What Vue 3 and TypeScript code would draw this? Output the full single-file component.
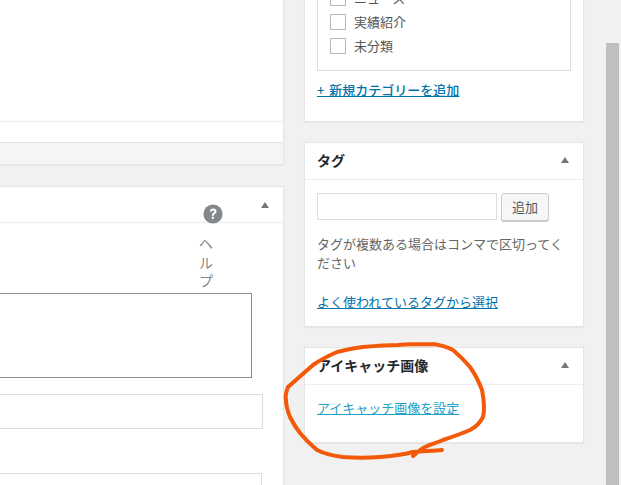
<script setup lang="ts">
const categories: string[] = ['ニュース', '実績紹介', '未分類']
</script>

<template>
  <div class="page">
    <main class="left">
      <section class="card top-card">
        <div class="top-body"></div>
        <div class="top-row"></div>
        <div class="top-foot"></div>
      </section>
      <section class="card editor-card">
        <header class="editor-head">
          <span class="caret"></span>
        </header>
        <div class="help">
          <svg class="help-icon" width="20" height="20" viewBox="0 0 20 20">
            <circle cx="10" cy="10" r="9.6" fill="#82878c" />
            <path d="M6.8 7.6c.1-2 1.500-3.100 3.400-3.100 2 0 3.300 1.100 3.300 2.800 0 1.300-.7 2-1.700 2.700-.8.500-1 .8-1 1.700H8.900c0-1.500.3-2.100 1.300-2.900.8-.6 1.200-.9 1.200-1.400 0-.6-.5-1-1.200-1-.8 0-1.300.4-1.400 1.200z" fill="#fff" />
            <rect x="8.800" y="12.700" width="2.100" height="2.200" fill="#fff" />
          </svg>
          <span class="help-text">ヘルプ</span>
        </div>
        <div class="editor-body">
          <div class="textarea"></div>
          <div class="field field-a"></div>
          <div class="field field-b"></div>
        </div>
      </section>
    </main>

    <aside class="right">
      <section class="card cat-card">
        <div class="cat-box">
          <label v-for="c in categories" :key="c" class="cat-row">
            <span class="check"></span>
            <span>{{ c }}</span>
          </label>
        </div>
        <a class="link add-link">+ 新規カテゴリーを追加</a>
      </section>

      <section class="card tag-card">
        <header class="side-head">
          <h2>タグ</h2>
          <span class="caret"></span>
        </header>
        <div class="tag-body">
          <div class="tag-input-row">
            <div class="tag-input"></div>
            <button class="tag-btn" type="button">追加</button>
          </div>
          <p class="tag-desc">タグが複数ある場合はコンマで区切ってください</p>
          <a class="link tag-link">よく使われているタグから選択</a>
        </div>
      </section>

      <section class="card thumb-card">
        <header class="side-head">
          <h2>アイキャッチ画像</h2>
          <span class="caret"></span>
        </header>
        <div class="thumb-body">
          <a class="thumb-link">アイキャッチ画像を設定</a>
        </div>
      </section>
    </aside>

    <div class="scrollbar"></div>

    <svg class="scribble" width="621" height="485" viewBox="0 0 621 485">
      <path
        d="M433 344C420 344 410 344 398 345C385 345 374 346 363 347C353 348 345 350 337 352C328 356 320 360 313 365C305 372 296 380 288 387C286 392 285 396 286 400C286 406 288 412 290 417C293 423 296 428 300 433C305 439 311 445 317 450C325 454 334 456 343 457C355 458 368 458 380 457C392 456 403 455 413 452C423 451 433 451 442 450M433 344C441 345 447 347 453 350C460 356 465 361 470 367C475 374 479 382 482 390C484 400 485 409 483 417C480 423 476 427 470 430C461 434 452 437 443 440C436 443 429 445 423 448C419 451 416 453 413 456"
        fill="none"
        stroke="#f25a0a"
        stroke-width="4"
        stroke-linecap="round"
        stroke-linejoin="round"
      />
    </svg>
  </div>
</template>

<style scoped>
.page {
  position: relative;
  display: flex;
  align-items: flex-start;
  width: 621px;
  height: 485px;
  overflow: hidden;
  background: #f1f1f1;
  font-family: "Noto Sans CJK JP", "Liberation Sans", sans-serif;
  font-size: 13px;
  color: #444;
}
.card {
  background: #fff;
  border: 1px solid #e5e5e5;
  box-shadow: 0 1px 1px rgba(0, 0, 0, 0.04);
  box-sizing: border-box;
}
.left {
  flex: none;
  width: 304px;
  margin-left: -20px;
  margin-right: 20px;
}
.top-card {
  height: 165px;
  border-top: 0;
  display: flex;
  flex-direction: column;
}
.top-body {
  height: 121px;
  border-bottom: 1px solid #eee;
}
.top-row {
  height: 20px;
  border-bottom: 1px solid #e5e5e5;
}
.top-foot {
  flex: 1;
  background: #f5f5f5;
}
.editor-card {
  position: relative;
  margin-top: 21px;
  height: 320px;
}
.editor-head {
  display: flex;
  justify-content: flex-end;
  height: 36px;
  padding: 15px 14px 0 0;
  box-sizing: border-box;
  border-bottom: 1px solid #eee;
}
.caret {
  width: 0;
  height: 0;
  border-left: 4px solid transparent;
  border-right: 4px solid transparent;
  border-bottom: 6px solid #72777c;
}
.help {
  position: absolute;
  left: 222px;
  top: 17px;
  width: 20px;
  display: flex;
  flex-direction: column;
}
.help-icon {
  display: block;
}
.help-text {
  width: 14px;
  margin: 10px 0 0 -4px;
  font-size: 14px;
  line-height: 18.500px;
  color: #82878c;
}
.editor-body {
  padding-top: 70px;
}
.textarea {
  width: 271px;
  height: 85px;
  border: 1px solid #8c8c8c;
  box-sizing: border-box;
}
.field {
  border: 1px solid #ddd;
  box-sizing: border-box;
}
.field-a {
  width: 282px;
  height: 35px;
  margin-top: 16px;
}
.field-b {
  width: 281px;
  height: 40px;
  margin-top: 44px;
}
.right {
  flex: none;
  width: 280px;
  margin-top: -20px;
}
.cat-card {
  height: 142px;
  padding: 0 12px;
  border-top: 0;
}
.cat-box {
  height: 91px;
  box-sizing: border-box;
  border: 1px solid #ddd;
  border-top: 0;
  padding: 6px 0 0 12px;
}
.cat-row {
  display: flex;
  align-items: center;
  gap: 8px;
  height: 24px;
  line-height: 24px;
  color: #555;
}
.check {
  flex: none;
  width: 16px;
  height: 16px;
  box-sizing: border-box;
  border: 1px solid #b4b9be;
  background: #fff;
}
.link {
  color: #0073aa;
  text-decoration: underline;
}
.add-link {
  display: block;
  margin-top: 9px;
  line-height: 20px;
  font-weight: 500;
  word-spacing: 2px;
}
.tag-card {
  margin-top: 20px;
  height: 185px;
}
.side-head {
  display: flex;
  align-items: center;
  justify-content: space-between;
  height: 37px;
  padding: 0 14px 2px 12px;
  box-sizing: border-box;
  border-bottom: 1px solid #eee;
}
.side-head h2 {
  margin: 0;
  font-size: 14px;
  font-weight: 700;
  line-height: 20px;
  color: #23282d;
}
.tag-body {
  padding: 13px 12px 0;
}
.tag-input-row {
  display: flex;
  gap: 4px;
}
.tag-input {
  width: 180px;
  height: 27px;
  box-sizing: border-box;
  border: 1px solid #ddd;
}
.tag-btn {
  width: 48px;
  height: 28px;
  padding: 0 0 2px;
  box-sizing: border-box;
  border: 1px solid #ccc;
  border-radius: 3px;
  background: #f7f7f7;
  box-shadow: 0 1px 0 #ccc;
  font: inherit;
  color: #555;
}
.tag-desc {
  margin: 13px 0 0;
  width: 256px;
  line-height: 19px;
  color: #666;
}
.tag-link {
  display: block;
  margin-top: 20px;
  line-height: 19px;
}
.thumb-card {
  margin-top: 20px;
  height: 96px;
}
.thumb-body {
  padding: 13px 12px;
}
.thumb-link {
  display: block;
  line-height: 20px;
  color: #21a0c8;
  text-decoration: underline;
}
.scrollbar {
  flex: none;
  width: 13px;
  height: 442px;
  margin: 43px 0 0 22px;
  background: #bfbfbf;
}
.scribble {
  position: absolute;
  left: 0;
  top: 0;
  pointer-events: none;
}
</style>
